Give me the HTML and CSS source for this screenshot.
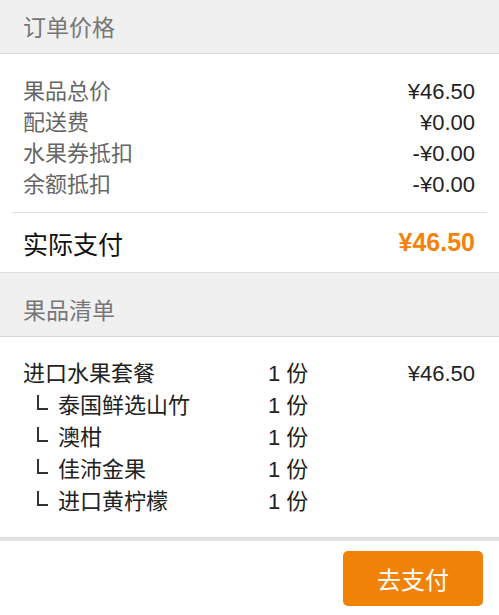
FILE: index.html
```html
<!DOCTYPE html>
<html lang="zh-CN">
<head>
  <meta charset="UTF-8">
  <meta name="viewport" content="width=device-width, initial-scale=1.0">
  <title>确认订单</title>
  <link rel="stylesheet" href="styles.css">
</head>
<body>
  <!-- 订单价格 -->
  <section class="card">
    <div class="card-title">订单价格</div>
    <ul class="price-list">
      <li><span>果品总价</span><span class="value">¥46.50</span></li>
      <li><span>配送费</span><span class="value">¥0.00</span></li>
      <li><span>水果券抵扣</span><span class="value">-¥0.00</span></li>
      <li><span>余额抵扣</span><span class="value">-¥0.00</span></li>
    </ul>
    <div class="total">
      <span>实际支付</span>
      <span class="total-value">¥46.50</span>
    </div>
  </section>

  <!-- 果品清单 -->
  <section class="card gap">
    <div class="card-title">果品清单</div>
    <div class="goods">
      <div class="goods-row">
        <span>进口水果套餐</span><span>1 份</span><span class="value">¥46.50</span>
      </div>
      <div class="goods-row sub">
        <span><i class="tree"></i>泰国鲜选山竹</span><span>1 份</span><span></span>
      </div>
      <div class="goods-row sub">
        <span><i class="tree"></i>澳柑</span><span>1 份</span><span></span>
      </div>
      <div class="goods-row sub">
        <span><i class="tree"></i>佳沛金果</span><span>1 份</span><span></span>
      </div>
      <div class="goods-row sub">
        <span><i class="tree"></i>进口黄柠檬</span><span>1 份</span><span></span>
      </div>
    </div>
  </section>

  <!-- 底部操作栏 -->
  <footer class="bar">
    <button class="pay-btn">去支付</button>
  </footer>
</body>
</html>
```

FILE: styles.css
```css
/* Reset */
* {
  margin: 0;
  padding: 0;
  box-sizing: border-box;
}

body {
  background: #f0f0f0;
  font-family: "Liberation Sans", "Noto Sans CJK SC", sans-serif;
  color: #222;
}

/* Cards */
.card {
  background: #fff;
  border-bottom: 1px solid #dcdcdc;
}

.card.gap {
  margin-top: 10px;
}

.card-title {
  height: 54px;
  line-height: 56px;
  padding-left: 23px;
  font-size: 23px;
  color: #777;
  background: #f0f0f0;
  border-bottom: 1px solid #d6d6d6;
}

/* Price list */
.price-list {
  list-style: none;
  padding: 22px 24px 12px 23px;
}

.price-list li {
  display: flex;
  justify-content: space-between;
  line-height: 31px;
  font-size: 22px;
  color: #666;
}

.value {
  color: #222;
  text-align: right;
}

.total {
  display: flex;
  justify-content: space-between;
  align-items: center;
  height: 60px;
  margin: 0 12px;
  padding: 0 12px 0 11px;
  border-top: 1px solid #dedede;
  font-size: 25px;
  color: #111;
}

.total-value {
  color: #f5820a;
  font-weight: bold;
}

/* Goods list */
.goods {
  padding: 21px 24px 19px 23px;
}

.goods-row {
  display: grid;
  grid-template-columns: 245px 1fr auto;
  line-height: 32px;
  font-size: 22px;
  color: #222;
}

.goods-row.sub > span:first-child {
  padding-left: 14px;
}

/* tree branch mark */
.tree {
  display: inline-block;
  width: 11px;
  height: 15px;
  margin-right: 10px;
  vertical-align: 3px;
  border-left: 2px solid #333;
  border-bottom: 2px solid #333;
}

/* Bottom bar */
.bar {
  display: flex;
  justify-content: flex-end;
  height: 78px;
  padding: 10px 16px 0 0;
  background: #fff;
  border-top: 3px solid #e2e2e2;
}

.pay-btn {
  width: 140px;
  height: 55px;
  border: none;
  border-radius: 5px;
  background: #f08307;
  color: #fff;
  font-family: inherit;
  font-size: 24px;
}
```
